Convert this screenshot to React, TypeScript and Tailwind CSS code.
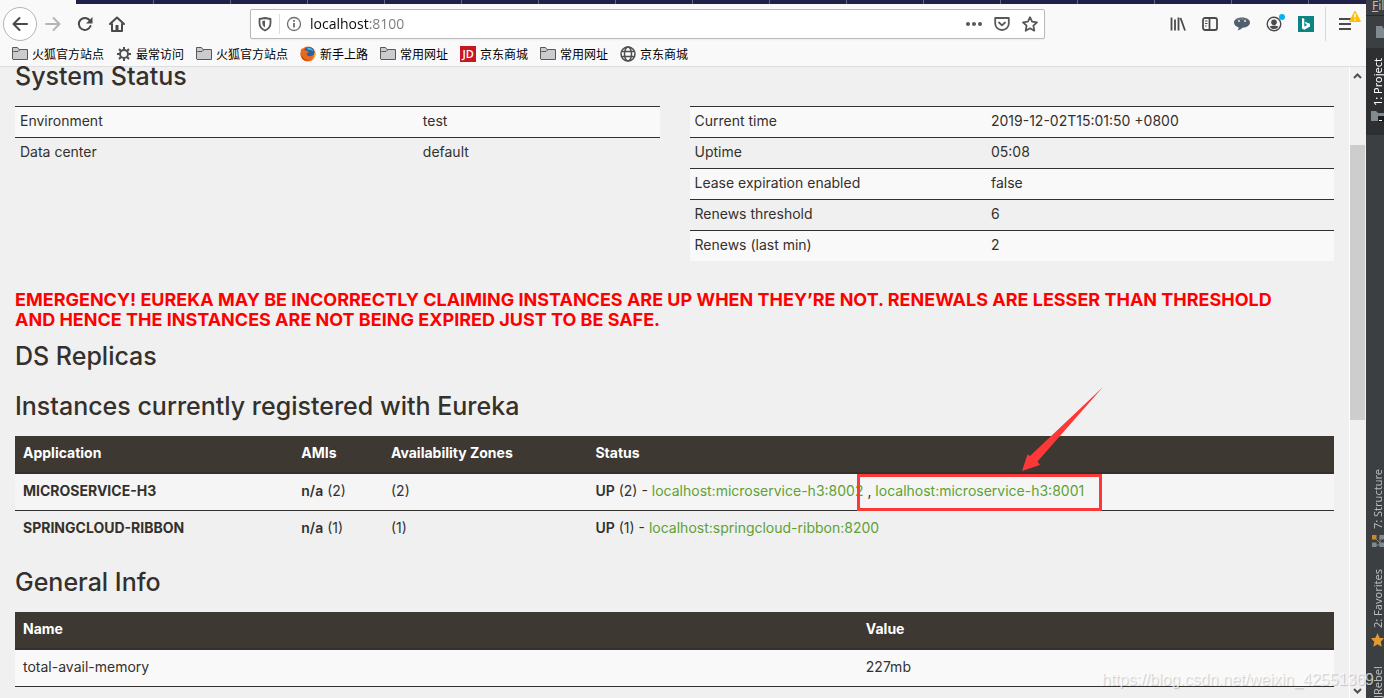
import React from 'react';
import clsx from 'clsx';

type Row = [string, string];

const environmentRows: Row[] = [
  ['Environment', 'test'],
  ['Data center', 'default'],
];

const statusRows: Row[] = [
  ['Current time', '2019-12-02T15:01:50 +0800'],
  ['Uptime', '05:08'],
  ['Lease expiration enabled', 'false'],
  ['Renews threshold', '6'],
  ['Renews (last min)', '2'],
];

const bookmarks = [
  { icon: 'folder', label: '火狐官方站点' },
  { icon: 'gear', label: '最常访问' },
  { icon: 'folder', label: '火狐官方站点' },
  { icon: 'firefox', label: '新手上路' },
  { icon: 'folder', label: '常用网址' },
  { icon: 'jd', label: '京东商城' },
  { icon: 'folder', label: '常用网址' },
  { icon: 'globe', label: '京东商城' },
];

const tabSeparators = Array.from({ length: 17 }, (_, i) => i);

const FolderIcon = () => (
  <svg width="16" height="16" viewBox="0 0 16 16" fill="none" stroke="#58585a">
    <path d="M.5 13V1.500h5l1.500 2h8.500V13.500H1z" fill="#cbcbcd" />
    <path d="M.5 6.500 1.500 5.500H6L8 3.500" />
  </svg>
);

const GearIcon = () => (
  <svg width="16" height="16" viewBox="0 0 16 16" fill="none" stroke="#4f4f51">
    <circle cx="8" cy="8" r="4" strokeWidth="2" />
    <path
      d="M8 1v2.500M8 12.500V15M1 8h2.500M12.500 8H15M3 3l1.800 1.800M11.200 11.200 13 13M3 13l1.800-1.800M11.200 4.800 13 3"
      strokeWidth="2"
    />
  </svg>
);

const FirefoxIcon = () => (
  <svg width="16" height="16" viewBox="0 0 16 16">
    <circle cx="8" cy="8" r="7.500" fill="#e8681c" />
    <circle cx="9" cy="6.500" r="5.500" fill="#1f63ad" />
    <path d="M7 2c3-1 6 1 6.500 4C12 4 10 3.500 8 4z" fill="#58b7e0" />
    <path d="M.8 4 2.500 2l.7 2c2-.4 3 .5 4.300 1L9 6.500 6.500 7.500C7 10.500 11 11.500 14 8c0 4-3 7-6.500 7S.5 12 .5 8z" fill="#e8681c" />
    <path d="M15 4.500c1.500 4-.5 9-5 10.700 3-2 4.500-5 5-10.700z" fill="#fbc02d" />
    <path d="M1.500 9c1 3 3.500 5 7 5-3 1.500-7 0-7-5z" fill="#c8391a" />
  </svg>
);

const GlobeIcon = () => (
  <svg width="16" height="16" viewBox="0 0 16 16" fill="none" stroke="#4f4f51" strokeWidth="1.500">
    <circle cx="8" cy="8" r="7" />
    <ellipse cx="8" cy="8" rx="3.500" ry="7" />
    <path d="M1.500 5.500h13M1.500 10.500h13" />
  </svg>
);

const BookmarkIcon = ({ name }: { name: string }) => {
  if (name === 'gear') return <GearIcon />;
  if (name === 'firefox') return <FirefoxIcon />;
  if (name === 'globe') return <GlobeIcon />;
  if (name === 'jd') {
    return (
      <span className="flex size-4 items-center justify-center bg-[#c81623] font-['Open_Sans',sans-serif] text-[11px] leading-4 font-semibold text-white">
        JD
      </span>
    );
  }
  return <FolderIcon />;
};

interface ToolButtonProps {
  label: string;
  children: React.ReactNode;
  className?: string;
}

const ToolButton: React.FC<ToolButtonProps> = ({ label, children, className }) => (
  <button aria-label={label} className={clsx('flex h-8 w-8 shrink-0 items-center justify-center', className)}>
    {children}
  </button>
);

const TabStrip = () => (
  <div className="flex h-1 overflow-hidden bg-[#1f2148]">
    <div className="w-[76px] shrink-0 bg-[#f9f9fa]" />
    <div className="w-px shrink-0" />
    {tabSeparators.map((i) => (
      <div key={i} className="w-[77px] shrink-0 border-r border-[#62637f]" />
    ))}
  </div>
);

const Toolbar = () => (
  <div className="flex h-10 items-center pl-[3px]">
    <button aria-label="Back" className="flex size-[34px] shrink-0 items-center justify-center rounded-full border border-[#b5b5b5] bg-white">
      <svg width="16" height="16" viewBox="0 0 16 16" fill="none" stroke="#4a4a4c" strokeWidth="2" strokeLinecap="round" strokeLinejoin="round">
        <path d="M7.500 2 1.500 8l6 6M2 8h13" />
      </svg>
    </button>
    <ToolButton label="Forward">
      <svg width="16" height="16" viewBox="0 0 16 16" fill="none" stroke="#b4b4b5" strokeWidth="2" strokeLinecap="round" strokeLinejoin="round">
        <path d="m8.500 2 6 6-6 6M14 8H1" />
      </svg>
    </ToolButton>
    <ToolButton label="Reload">
      <svg width="16" height="16" viewBox="0 0 16 16" fill="none" stroke="#4a4a4c" strokeWidth="2" strokeLinecap="round">
        <path d="M12.800 4.500A6 6 0 1 0 13.500 10" />
        <path d="M15.500 1v6.500H9z" fill="#4a4a4c" stroke="none" />
      </svg>
    </ToolButton>
    <ToolButton label="Home">
      <svg width="16" height="16" viewBox="0 0 16 16" fill="none" stroke="#4a4a4c" strokeWidth="2" strokeLinecap="round" strokeLinejoin="round">
        <path d="M1 8l7-6.500L15 8M3 8v7h10V8" />
        <path d="M6.500 14V9h3v5z" fill="#4a4a4c" stroke="none" />
      </svg>
    </ToolButton>

    <div className="mx-[117px] flex h-[30px] min-w-0 flex-1 items-center rounded-xs border border-[#b9b9ba] bg-white shadow-xs">
      <button aria-label="Tracking protection" className="flex h-full w-7 shrink-0 items-center justify-center">
        <svg width="14" height="16" viewBox="0 0 14 16" fill="none" stroke="#58585a" strokeWidth="1.800">
          <path d="M7 2 12.500 3v4c0 3.500-2 6-5.500 7.500C3.500 13 1.500 10.500 1.500 7V3z" strokeLinejoin="round" />
          <path d="M7 4.500v7C5 10 4.300 8.500 4.300 7V5z" fill="#58585a" stroke="none" />
        </svg>
      </button>
      <div className="h-5 w-px bg-[#dcdcdd]" />
      <button aria-label="Site information" className="flex h-full w-7 shrink-0 items-center justify-center">
        <svg width="16" height="16" viewBox="0 0 16 16" fill="none" stroke="#6d6d6f">
          <circle cx="8" cy="8" r="6.500" strokeWidth="1.300" />
          <path d="M8 7v4.500M8 4v1.800" strokeWidth="1.800" />
        </svg>
      </button>
      <input
        type="text"
        aria-label="Address"
        defaultValue="localhost:8100"
        className="min-w-0 flex-1 bg-[linear-gradient(to_right,#0c0c0d_61px,#7b7b7c_61px)] bg-clip-text pl-0.5 font-['Open_Sans',sans-serif] text-sm text-transparent outline-none"
      />
      <div className="flex items-center">
        <button aria-label="Page actions" className="flex h-7 w-7 items-center justify-center">
          <svg width="16" height="16" viewBox="0 0 16 16" fill="#58585a">
            <circle cx="2" cy="8" r="2" />
            <circle cx="8" cy="8" r="2" />
            <circle cx="14" cy="8" r="2" />
          </svg>
        </button>
        <button aria-label="Save to Pocket" className="flex h-7 w-7 items-center justify-center">
          <svg width="16" height="16" viewBox="0 0 16 16" fill="none" stroke="#58585a" strokeWidth="1.800" strokeLinecap="round" strokeLinejoin="round">
            <path d="M1.200 2h13.600v5.500a6.800 6.500 0 0 1-13.600 0z" />
            <path d="M5 6.500 8 9.300l3-2.800" />
          </svg>
        </button>
        <button aria-label="Bookmark this page" className="flex h-7 w-7 items-center justify-center">
          <svg width="16" height="16" viewBox="0 0 16 16" fill="none" stroke="#58585a" strokeWidth="1.800" strokeLinejoin="round">
            <path d="m8 1.200 2.100 4.500 4.900.6-3.600 3.400.9 5L8 12.300l-4.300 2.400.9-5L1 6.300l4.900-.6z" />
          </svg>
        </button>
      </div>
    </div>

    <ToolButton label="Library">
      <svg width="16" height="16" viewBox="0 0 16 16" fill="none" stroke="#4a4a4c" strokeWidth="1.800">
        <path d="M1.500 1.500v13M5 3.500v11M8.500 1.500v13M10.500 2l4.500 12.500" />
      </svg>
    </ToolButton>
    <ToolButton label="Sidebars">
      <svg width="16" height="16" viewBox="0 0 16 16" fill="none" stroke="#4a4a4c" strokeWidth="1.800">
        <rect x="1" y="2" width="14" height="12" rx="2" />
        <path d="M7.500 2v12" />
        <path d="M3 5h2.500M3 7.500h2.500M3 10h1.500" strokeWidth="1" />
      </svg>
    </ToolButton>
    <ToolButton label="Chat">
      <svg width="18" height="16" viewBox="0 0 18 16">
        <path d="M9 1.500c4.800 0 8 2.200 8 5s-3 5-7.500 5.200C8 13 6.500 14 4.500 14.500c1-1 1.200-2 1-3.200C2.800 10.500 1 8.800 1 6.500c0-2.800 3.200-5 8-5z" fill="#505e6d" />
        <path d="M3 4.500c2-3 10-3 12 0-3-1.200-9-1.200-12 0z" fill="#75828f" />
        <circle cx="6" cy="5" r="1" fill="#dfe5ea" />
        <circle cx="12" cy="5" r="1" fill="#dfe5ea" />
      </svg>
    </ToolButton>
    <ToolButton label="Account" className="relative">
      <svg width="16" height="16" viewBox="0 0 16 16" fill="none" stroke="#4a4a4c">
        <circle cx="8" cy="8" r="6.800" strokeWidth="1.400" />
        <circle cx="8" cy="6.300" r="2.800" fill="#4a4a4c" stroke="none" />
        <path d="M3.500 10.500c1 .2 2-1 4.500-1s3.500 1.200 4.500 1C11.500 12.200 10 13 8 13s-3.500-.8-4.500-2.500z" fill="#4a4a4c" stroke="none" />
      </svg>
      <span className="absolute right-[5px] top-1.5 size-1.5 rounded-full bg-[#00b3f4]" />
    </ToolButton>
    <ToolButton label="Bing">
      <svg width="16" height="16" viewBox="0 0 16 16">
        <path d="M0 0h16v16H0z" fill="#0c8484" />
        <path d="m4 2 2.300.8v7.800l3-1.700-1.600-.8-.9-2.300 5.200 1.900v2.700l-5.700 3.400L4 12.500z" fill="#fff" />
      </svg>
    </ToolButton>
    <div className="mx-[3px] h-[34px] w-px bg-[#d8d8d9]" />
    <ToolButton label="Menu" className="relative mr-[5px]">
      <svg width="12" height="14" viewBox="0 0 12 14" stroke="#4a4a4c" strokeWidth="2">
        <path d="M0 2h12M0 7h12M0 12h12" />
      </svg>
      <span className="absolute right-0 top-0.5">
        <svg width="12" height="12" viewBox="0 0 12 12">
          <path d="M6 1 11.500 11.500H.5z" fill="#ffbf00" stroke="#ffbf00" strokeLinejoin="round" />
          <path d="M6 3.500v4M6 9v1.500" stroke="#fff" strokeWidth="1.500" />
        </svg>
      </span>
    </ToolButton>
  </div>
);

const BookmarksBar = () => (
  <nav className="flex h-[22px] items-center gap-3 pb-0.5 pl-3 font-['Noto_Sans_CJK_SC',sans-serif] text-xs text-black">
    {bookmarks.map((bookmark, i) => (
      <a key={i} href="#" className="flex shrink-0 items-center gap-1 leading-4">
        <BookmarkIcon name={bookmark.icon} />
        {bookmark.label}
      </a>
    ))}
  </nav>
);

const InfoTable = ({ rows, labelWidth }: { rows: Row[]; labelWidth: string }) => (
  <table className="w-full table-fixed border-separate border-spacing-0">
    <tbody>
      {rows.map(([label, value]) => (
        <tr key={label} className="odd:bg-[#f9f9f9]">
          <th scope="row" className={clsx('h-[31px] border-t border-[#34302d] px-[5px] pb-0.5 text-left font-normal', labelWidth)}>
            {label}
          </th>
          <td className="border-t border-[#34302d] px-[5px] pb-0.5">{value}</td>
        </tr>
      ))}
    </tbody>
  </table>
);

const headCell = 'h-[38px] border-b-2 border-[#34302d] px-2 pb-0.5 text-left font-bold text-white';
const bodyCell = 'h-[37px] border-b border-[#34302d] px-2 pb-0.5';
const lastCell = 'h-[37px] px-2 pb-1';
const heading = 'text-[25px] leading-[26px] font-medium';

const InstancesTable = () => (
  <table className="mt-[17px] w-full table-fixed border-separate border-spacing-0">
    <thead className="bg-[#3d3832]">
      <tr>
        <th className={clsx(headCell, 'w-[21.1%]')}>Application</th>
        <th className={clsx(headCell, 'w-[6.8%]')}>AMIs</th>
        <th className={clsx(headCell, 'w-[15.5%]')}>Availability Zones</th>
        <th className={headCell}>Status</th>
      </tr>
    </thead>
    <tbody>
      <tr className="bg-[#f5f5f5]">
        <td className={clsx(bodyCell, 'font-bold')}>MICROSERVICE-H3</td>
        <td className={bodyCell}><b className="font-semibold">n/a</b> (2)</td>
        <td className={bodyCell}>(2)</td>
        <td className={clsx(bodyCell, 'whitespace-nowrap')}>
          <b className="font-semibold">UP</b> (2) - <a href="#" className="text-[#5fa134]">localhost:microservice-h3:8002</a>{' '}
          <span className="relative">
            , <a href="#" className="text-[#5fa134]">localhost:microservice-h3:8001</a>
            {/* callout around the second instance */}
            <span className="absolute -left-2.5 -top-2 h-[37px] w-[245px] border-3 border-[#fc3838]" />
            <svg className="absolute -top-24 left-[155px]" width="82" height="86" viewBox="0 0 82 86">
              <path d="M81 1 15.500 75.500l2.500 3.500L0 85 5.500 68.500l2.500 1.500z" fill="#fc3838" />
            </svg>
          </span>
        </td>
      </tr>
      <tr>
        <td className={clsx(lastCell, 'font-bold')}>SPRINGCLOUD-RIBBON</td>
        <td className={lastCell}><b className="font-semibold">n/a</b> (1)</td>
        <td className={lastCell}>(1)</td>
        <td className={lastCell}>
          <b className="font-semibold">UP</b> (1) - <a href="#" className="text-[#5fa134]">localhost:springcloud-ribbon:8200</a>
        </td>
      </tr>
    </tbody>
  </table>
);

const EurekaPage = () => (
  <main className="min-w-0 flex-1 px-[15px] font-['Inter',sans-serif] text-sm leading-5 text-[#34302d]">
    <h1 className="text-[25px] leading-[18px] font-medium">System Status</h1>
    <div className="mt-[21px] grid grid-cols-2 items-start gap-[30px]">
      <InfoTable rows={environmentRows} labelWidth="w-[62.500%]" />
      <InfoTable rows={statusRows} labelWidth="w-[46%]" />
    </div>
    <h4 className="mt-[29px] text-lg leading-5 font-bold text-[#ff0000]">
      EMERGENCY! EUREKA MAY BE INCORRECTLY CLAIMING INSTANCES ARE UP WHEN THEY’RE NOT. RENEWALS ARE LESSER THAN THRESHOLD
      <br />
      AND HENCE THE INSTANCES ARE NOT BEING EXPIRED JUST TO BE SAFE.
    </h4>
    <h1 className={clsx(heading, 'mt-[13px]')}>DS Replicas</h1>
    <h1 className={clsx(heading, 'mt-6')}>Instances currently registered with Eureka</h1>
    <InstancesTable />
    <h1 className={clsx(heading, 'mt-[21px]')}>General Info</h1>
    <table className="mt-[17px] w-full table-fixed border-separate border-spacing-0">
      <thead className="bg-[#3d3832]">
        <tr>
          <th className={clsx(headCell, 'w-[63.900%]')}>Name</th>
          <th className={headCell}>Value</th>
        </tr>
      </thead>
      <tbody>
        <tr className="bg-[#f9f9f9]">
          <td className={bodyCell}>total-avail-memory</td>
          <td className={bodyCell}>227mb</td>
        </tr>
      </tbody>
    </table>
  </main>
);

const Scrollbar = () => (
  <div className="flex w-[17px] shrink-0 flex-col items-center border-l border-white bg-[#f0f0f0]">
    <svg width="16" height="17" viewBox="0 0 16 17" fill="none" stroke="#505050" strokeWidth="2">
      <path d="m4 11 3.500-3.500L11 11" />
    </svg>
    <div className="grid w-full flex-1 grid-rows-[61fr_275fr_261fr]">
      <div />
      <div className="mr-px bg-[#cdcdcd]" />
    </div>
    <svg width="16" height="17" viewBox="0 0 16 17" fill="none" stroke="#505050" strokeWidth="2">
      <path d="m4 8 3.500 3.500L11 8" />
    </svg>
  </div>
);

const sideLabel = 'rotate-180 whitespace-nowrap text-[11px] leading-3 [writing-mode:vertical-rl]';

const IdeStrip = () => (
  <aside className="flex w-[18px] shrink-0 flex-col overflow-hidden bg-[#3c3f41] font-['Noto_Sans',sans-serif] text-[#bbbbbb]">
    <div className="h-4 border-b border-[#282828] pl-1.5 text-xs leading-3">
      <u>F</u>il
    </div>
    <div className="h-8 pl-2.5 pt-2.5">
      <svg width="16" height="12" viewBox="0 0 16 12" fill="#7f8b91">
        <path d="M0 0h6l2 3h8v9H0z" />
      </svg>
    </div>
    <div className="flex h-[87px] flex-col items-end gap-1 overflow-hidden bg-[#2d2f30] pt-2.5 text-white">
      <span className={sideLabel}><u>1</u>: Project</span>
      <svg width="13" height="12" viewBox="0 0 13 12" className="shrink-0">
        <path d="M0 1h5l2 2h6v8H0z" fill="#7f8b91" />
        <path d="M7 6h6v6H7z" fill="#1b1c1d" />
        <path d="M8 10.500h3" stroke="#fff" />
      </svg>
    </div>
    <div className="flex min-h-0 flex-1 flex-col items-end justify-end overflow-hidden">
      <span className={sideLabel}><u>7</u>: Structure</span>
      <svg width="12" height="12" viewBox="0 0 12 12" className="mt-1.5 mb-[22px] shrink-0">
        <path d="M4 4l4 4M4 10h4V2" stroke="#7f8b91" fill="none" />
        <path d="M0 0h4.500v4.500H0z" fill="#d08a25" />
        <path d="M7.500 0H12v4.500H7.500zM0 7.500h4.500V12H0zM7.500 7.500H12V12H7.500z" fill="#7f8b91" />
      </svg>
      <span className={sideLabel}><u>2</u>: Favorites</span>
      <svg width="13" height="14" viewBox="0 0 13 14" className="mt-[5px] mb-[21px] shrink-0" fill="#e39a35">
        <path d="m6.500 0 2 4.800 4.500.5-3.300 3.400 1 5-4.200-2.500-4.200 2.500 1-5L0 5.300l4.500-.5z" />
      </svg>
      <span className={clsx(sideLabel, 'h-[30px]')}>JRebel</span>
    </div>
  </aside>
);

const App: React.FC = () => {
  return (
    <div className="relative flex h-screen overflow-hidden bg-[#f0f0f0]">
      <div className="flex min-w-0 flex-1 flex-col">
        <header className="shrink-0 border-b border-[#dededf] bg-[#f9f9fa]">
          <TabStrip />
          <Toolbar />
          <BookmarksBar />
        </header>
        <div className="flex min-h-0 flex-1">
          <EurekaPage />
          <Scrollbar />
        </div>
      </div>
      <IdeStrip />
      <span className="pointer-events-none absolute bottom-2 right-2.5 font-['Liberation_Sans',sans-serif] text-base leading-5 text-white/70 [text-shadow:1px_1px_1px_rgba(0,0,0,0.2)]">
        https://blog.csdn.net/weixin_42551369
      </span>
    </div>
  );
};

export default App;
